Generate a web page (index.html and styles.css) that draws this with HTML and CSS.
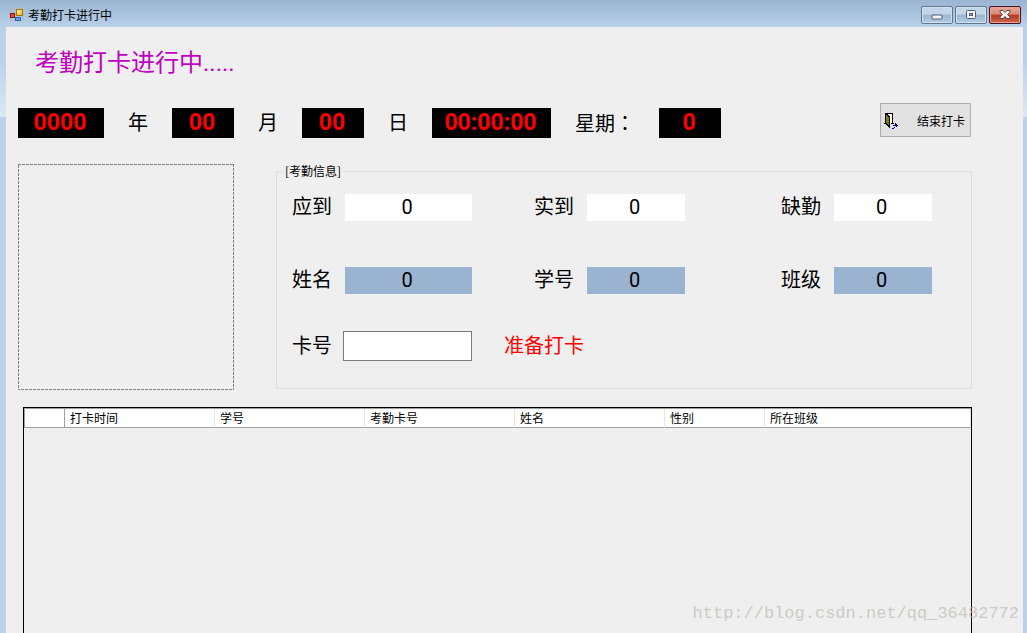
FILE: index.html
```html
<!DOCTYPE html>
<html lang="zh-CN">
<head>
<meta charset="utf-8">
<title>考勤打卡进行中</title>
<link rel="stylesheet" href="styles.css">
</head>
<body>
<div class="window">
  <header class="titlebar">
    <svg class="app-icon" width="14" height="14" viewBox="0 0 14 14" aria-hidden="true">
      <defs>
        <linearGradient id="gold" x1="0" y1="0" x2="1" y2="1"><stop offset="0" stop-color="#fff6c0"/><stop offset="1" stop-color="#f0b000"/></linearGradient>
      </defs>
      <rect x="0.5" y="0.5" width="13" height="12" fill="none" stroke="#b4bac2"/>
      <rect x="6.5" y="1.500" width="6" height="6" fill="url(#gold)" stroke="#a07400"/>
      <rect x="0.5" y="5.500" width="4" height="4" fill="#e05038" stroke="#8c1408"/>
      <rect x="5.500" y="9.500" width="5" height="3" fill="#6ea4f4" stroke="#2c5cb8"/>
    </svg>
    <h1 class="title">考勤打卡进行中</h1>
    <div class="controls">
      <button class="control" type="button" aria-label="最小化">
        <svg width="12" height="10" viewBox="0 0 12 10"><rect x="1" y="5" width="10" height="4" rx="1" fill="#f4f4f4" stroke="#535b70"/></svg>
      </button>
      <button class="control" type="button" aria-label="最大化">
        <svg width="12" height="10" viewBox="0 0 12 10"><rect x="1.5" y="0.5" width="9" height="8" rx="1" fill="#f4f4f4" stroke="#535b70"/><rect x="4.5" y="3.500" width="3" height="2" fill="#9db8d6" stroke="#535b70"/></svg>
      </button>
      <button class="control control-close" type="button" aria-label="关闭">
        <svg width="12" height="10" viewBox="0 0 12 10"><path d="M1 .5h3l2 2 2-2h3v1.500L8.500 4.500 11 7v1.500H8l-2-2-2 2H1V7l2.500-2.500L1 2z" fill="#f6f6f6" stroke="#5b4650"/></svg>
      </button>
    </div>
  </header>

  <main class="client">
    <h2 class="heading">考勤打卡进行中.....</h2>

    <div class="toolbar">
      <div class="clock">
        <span class="led led-year">0000</span>
        <span>年</span>
        <span class="led">00</span>
        <span>月</span>
        <span class="led">00</span>
        <span>日</span>
        <span class="led led-time">00:00:00</span>
        <span>星期<span class="colon" lang="zh-TW">：</span></span>
        <span class="led">0</span>
      </div>
      <button class="finish" type="button">
        <svg width="15" height="17" viewBox="0 0 15 17" shape-rendering="crispEdges" aria-hidden="true">
          <path d="M1 1h8v10H1z" fill="#000"/>
          <path d="M3 2h5v9H3z" fill="#fff"/>
          <path d="M0 11h3v1H0zM7 11h3v1H7z" fill="#000"/>
          <path d="M1 1h1l4 4v11H5l-4-4z" fill="#000"/>
          <path d="M2 3l3 3v8l-3-3z" fill="#808000"/>
          <path d="M11 11h1v1h1v1h1v1h-1v1h-1v-1H9v-1h2zM8 16h2v1H8zM10 15h1v1h-1z" fill="#000080"/>
        </svg>
        <span>结束打卡</span>
      </button>
    </div>

    <div class="panels">
      <div class="photo">
        <svg width="100%" height="100%" aria-hidden="true"><rect class="photo-edge" width="100%" height="100%"/></svg>
      </div>
      <fieldset class="info">
        <legend>[考勤信息]</legend>
        <div class="field"><span>应到</span><output class="value value-wide">0</output></div>
        <div class="field"><span>实到</span><output class="value">0</output></div>
        <div class="field"><span>缺勤</span><output class="value">0</output></div>
        <div class="field"><span>姓名</span><output class="value value-wide value-blue">0</output></div>
        <div class="field"><span>学号</span><output class="value value-blue">0</output></div>
        <div class="field"><span>班级</span><output class="value value-blue">0</output></div>
        <div class="field field-card">
          <label for="card">卡号</label>
          <input class="card" id="card" type="text">
          <span class="status">准备打卡</span>
        </div>
      </fieldset>
    </div>

    <div class="grid">
      <table class="records">
        <colgroup>
          <col class="col-mark"><col class="col-wide"><col class="col-wide"><col class="col-wide"><col class="col-wide"><col class="col-narrow"><col>
        </colgroup>
        <thead>
          <tr><td class="corner"></td><th>打卡时间</th><th>学号</th><th>考勤卡号</th><th>姓名</th><th>性别</th><th>所在班级</th></tr>
        </thead>
      </table>
    </div>
  </main>
  <div class="watermark">http://blog.csdn.net/qq_36482772</div>
</div>
</body>
</html>
```
FILE: styles.css
```css
* {
  box-sizing: border-box;
}

body {
  margin: 0;
  font-family: Roboto, "Noto Sans CJK SC", sans-serif;
  color: #000;
}

button,
input {
  font: inherit;
  color: inherit;
}

.window {
  position: relative;
  display: flex;
  flex-direction: column;
  height: 100vh;
  padding: 0 4px 0 6px;
  overflow: hidden;
  background: linear-gradient(#9ab4d1 0, #b9d1ea 27px, #b9d1ea 60px, #dce8f5 116px, #bad1e9 118px);
}

.titlebar {
  display: flex;
  flex: none;
  align-items: center;
  gap: 4px;
  height: 27px;
  padding: 3px 0 0 4px;
}

.title {
  flex: 1;
  margin: 0;
  font: 12px/16px "Noto Sans CJK SC", sans-serif;
}

.controls {
  display: flex;
  gap: 2px;
  margin-right: 2px;
}

.control {
  display: flex;
  align-items: center;
  justify-content: center;
  width: 32px;
  height: 18px;
  padding: 0;
  border: 1px solid #5f7590;
  border-radius: 2px;
  background: linear-gradient(#c3d5e8 0 45%, #9bb5d0 50%, #b4cde6);
  box-shadow: inset 0 0 0 1px #d3e2f1;
}

.control-close {
  border-color: #431420;
  background: linear-gradient(#e6a898, #d98875 45%, #b5391f 50%, #d0664c);
  box-shadow: inset 0 0 0 1px #e3a596;
}

.client {
  display: flex;
  flex: 1;
  flex-direction: column;
  min-height: 0;
  padding: 20px 51px 0 12px;
  background: #efefef;
}

.heading {
  margin: 0 0 24px 17px;
  font-size: 24px;
  font-weight: 400;
  line-height: 32px;
  color: #c000c0;
}

.toolbar {
  display: flex;
  align-items: center;
  justify-content: space-between;
  height: 34px;
  padding-right: 1px;
}

.clock {
  display: flex;
  align-items: center;
  gap: 24px;
  margin-top: 6px;
  font-size: 20px;
  line-height: 30px;
  white-space: nowrap;
}

.colon {
  font-family: "Noto Sans CJK TC", sans-serif;
}

.led {
  width: 62px;
  height: 30px;
  padding-right: 2px;
  background: #000;
  color: #f00;
  font-size: 23px;
  font-weight: 700;
  text-align: center;
}

.led-year {
  width: 86px;
}

.led-time {
  width: 119px;
}

.finish {
  display: flex;
  align-items: center;
  justify-content: space-between;
  width: 91px;
  height: 34px;
  padding: 0 5px 0 3px;
  border: 1px solid #adadad;
  background: #e1e1e1;
  font-size: 12px;
}

.panels {
  display: flex;
  gap: 42px;
  margin-top: 27px;
}

.photo {
  flex: none;
  width: 216px;
  height: 226px;
}

.photo svg {
  display: block;
}

.photo-edge {
  fill: none;
  stroke: #808080;
  stroke-width: 2px;
  stroke-dasharray: 3px 1px;
}

.info {
  display: grid;
  flex: 1;
  grid-template-columns: 242fr 247fr 190fr;
  align-content: start;
  row-gap: 46px;
  min-width: 0;
  height: 226px;
  margin: -1px 0 0;
  padding: 15px 0 0 15px;
  border: 1px solid #dcdcdc;
  font-size: 20px;
  line-height: 27px;
}

.info legend {
  margin-left: -9px;
  padding: 0 2px;
  font: 12px/16px "Noto Sans CJK SC", sans-serif;
}

.field {
  display: flex;
  align-items: center;
  gap: 13px;
  white-space: nowrap;
}

.value {
  width: 98px;
  height: 27px;
  padding-right: 3px;
  background: #fff;
  text-align: center;
}

.value-wide {
  width: 127px;
}

.value-blue {
  background: #99b3d1;
}

.field-card {
  grid-column: 1 / -1;
  gap: 11px;
  margin-top: -9px;
}

.card {
  width: 129px;
  height: 30px;
  padding: 0 4px;
  border: 1px solid #7a7a7a;
  background: #fff;
}

.status {
  margin-left: 21px;
  color: #f00;
}

.grid {
  flex: 1;
  margin: 17px 0 0 5px;
  border: 1px solid #000;
  border-bottom: 0;
}

.records {
  width: 100%;
  table-layout: fixed;
  border-collapse: separate;
  border-spacing: 0;
  background: #fff;
  border-top: 1px solid #a0a0a0;
  font: 12px/18px "Noto Sans CJK SC", sans-serif;
}

.col-mark {
  width: 41px;
}

.col-wide {
  width: 150px;
}

.col-narrow {
  width: 100px;
}

.records th,
.records td {
  height: 19px;
  padding: 0 5px;
  border-right: 1px solid #e5e5e5;
  border-bottom: 1px solid #a0a0a0;
  font-weight: 400;
  text-align: left;
}

.records .corner {
  border-right-color: #a0a0a0;
  border-left: 1px solid #a0a0a0;
}

.watermark {
  position: absolute;
  right: 8px;
  bottom: 7px;
  color: #bdbdb3;
  opacity: 0.7;
  font: 17px/24px "Liberation Mono", monospace;
  pointer-events: none;
}
```
